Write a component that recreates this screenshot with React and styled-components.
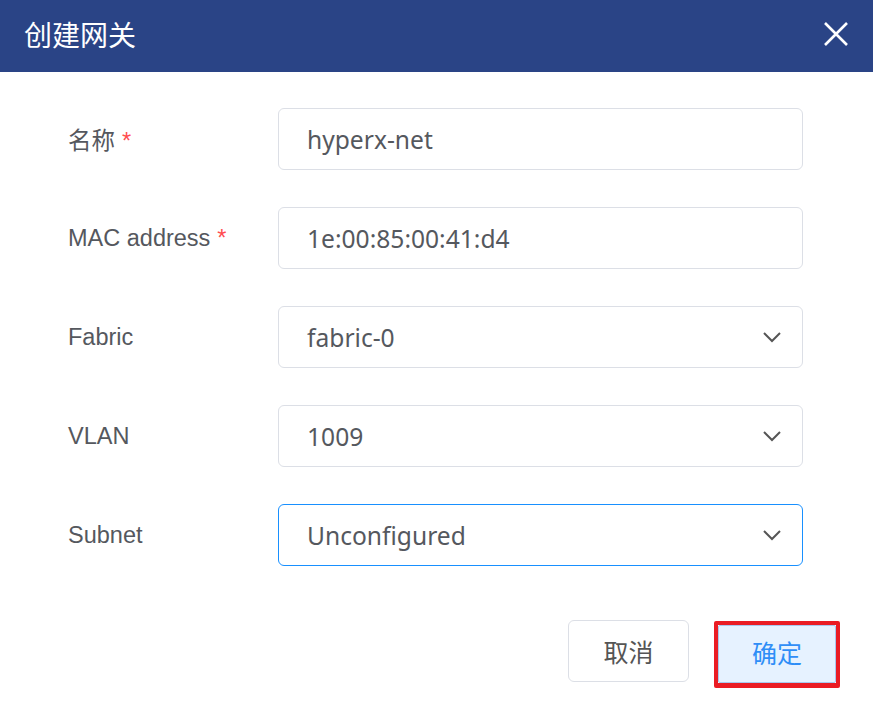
import React from "react";
import styled, { createGlobalStyle } from "styled-components";

const Global = createGlobalStyle`
  html, body { margin: 0; padding: 0; background: #fff; }
  body { font-family: "Noto Sans", "Noto Sans CJK SC", sans-serif; }
  * { box-sizing: border-box; }
`;

const Dialog = styled.div`
  width: 873px;
  height: 713px;
  background: #fff;
  display: flex;
  flex-direction: column;
`;

const Header = styled.div`
  height: 72px;
  background: #2a4486;
  display: flex;
  align-items: center;
  justify-content: space-between;
  padding: 0 24px 0 24px;
`;

const Title = styled.div`
  color: #fff;
  font-family: "Noto Sans CJK SC", sans-serif;
  font-size: 28px;
  font-weight: 400;
  line-height: 1;
  margin-top: -4px;
`;

const Close = styled.button`
  border: none;
  background: none;
  padding: 0;
  width: 26px;
  height: 26px;
  display: flex;
  margin-top: -4px;
  cursor: pointer;
`;

const Form = styled.div`
  display: flex;
  flex-direction: column;
  gap: 37px;
  padding: 36px 70px 0 68px;
`;

const Row = styled.div`
  display: flex;
  align-items: center;
  height: 62px;
`;

const Label = styled.div`
  width: 210px;
  font-size: 23.5px;
  color: #55585e;
  font-family: "Liberation Sans", "Noto Sans CJK SC", sans-serif;
`;

const Star = styled.span`
  color: #ff4d4f;
  margin-left: 7px;
`;

const Field = styled.div`
  flex: 1;
  height: 62px;
  border: 1px solid ${(p) => (p.$focus ? "#1890ff" : "#dcdfe6")};
  border-radius: 6px;
  display: flex;
  align-items: center;
  justify-content: space-between;
  padding: 0 20px 0 28px;
  font-size: 24.6px;
  color: #55585e;
`;

const Footer = styled.div`
  display: flex;
  justify-content: flex-end;
  gap: 25px;
  padding: 54px 33px 0 0;
  align-items: flex-start;
`;

const Button = styled.button`
  width: 121px;
  height: 62px;
  border-radius: 6px;
  font-family: "Noto Sans CJK SC", sans-serif;
  font-size: 25px;
  line-height: 1;
  padding: 0 0 ${(p) => (p.$primary ? "3px" : "0")};
  border: 1px solid ${(p) => (p.$primary ? "#a8c8ee" : "#dcdfe6")};
  background: ${(p) => (p.$primary ? "#e6f2ff" : "#fff")};
  color: ${(p) => (p.$primary ? "#2f8ef7" : "#555")};
  cursor: pointer;
`;

const Highlight = styled.div`
  border: 4px solid #ea1c24;
  border-bottom-width: 5px;
  border-radius: 2px;
  margin-top: 1px;
  display: flex;
  & > button {
    width: 118px;
    height: 58px;
    border-radius: 2px;
  }
`;

const Chevron = () => (
  <svg width="20" height="12" viewBox="0 0 20 12" fill="none">
    <path d="M2 2 L10 10 L18 2" stroke="#555" strokeWidth="2" />
  </svg>
);

const rows = [
  { label: "名称", req: true, value: "hyperx-net" },
  { label: "MAC address", req: true, value: "1e:00:85:00:41:d4" },
  { label: "Fabric", value: "fabric-0", select: true },
  { label: "VLAN", value: "1009", select: true },
  { label: "Subnet", value: "Unconfigured", select: true, focus: true },
];

export default function App() {
  return (
    <>
      <Global />
      <Dialog>
        <Header>
          <Title>创建网关</Title>
          <Close aria-label="close">
            <svg width="26" height="26" viewBox="0 0 26 26">
              <path d="M2 2 L24 24 M24 2 L2 24" stroke="#fff" strokeWidth="2.6" />
            </svg>
          </Close>
        </Header>
        <Form>
          {rows.map((r) => (
            <Row key={r.label}>
              <Label>
                {r.label}
                {r.req && <Star>*</Star>}
              </Label>
              <Field $focus={r.focus}>
                <span>{r.value}</span>
                {r.select && <Chevron />}
              </Field>
            </Row>
          ))}
        </Form>
        <Footer>
          <Button>取消</Button>
          <Highlight>
            <Button $primary>确定</Button>
          </Highlight>
        </Footer>
      </Dialog>
    </>
  );
}
